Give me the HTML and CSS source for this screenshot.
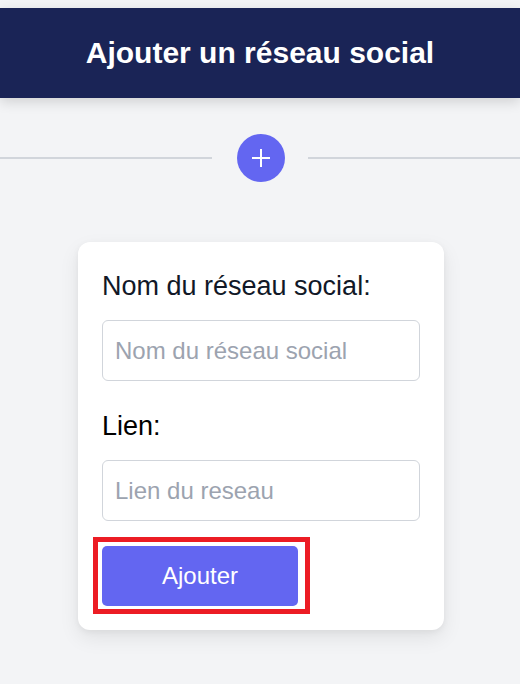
FILE: index.html
```html
<!DOCTYPE html>
<html lang="fr">
<head>
<meta charset="utf-8">
<title>Ajouter un réseau social</title>
<link rel="stylesheet" href="styles.css">
</head>
<body>
  <header class="topbar">
    <h1 class="title">Ajouter un réseau social</h1>
  </header>
  <div class="divider">
    <span class="line"></span>
    <span class="plus">
      <svg width="20" height="20" viewBox="0 0 20 20"><path d="M10 1v18M1 10h18" stroke="#fff" stroke-width="2" fill="none"/></svg>
    </span>
    <span class="line"></span>
  </div>
  <main class="wrap">
    <form class="card">
      <label class="label" for="nom">Nom du réseau social:</label>
      <input class="field" id="nom" type="text" placeholder="Nom du réseau social">
      <label class="label second" for="lien">Lien:</label>
      <input class="field" id="lien" type="text" placeholder="Lien du reseau">
      <div class="btnwrap">
        <button class="btn" type="button">Ajouter</button>
        <span class="mark"></span>
      </div>
    </form>
  </main>
</body>
</html>
```
FILE: styles.css
```css
* { box-sizing: border-box; }
html, body { margin: 0; padding: 0; }
body {
  background: #f3f4f6;
  font-family: "Liberation Sans", Arial, sans-serif;
  padding-top: 8px;
  min-height: 684px;
}
.topbar {
  background: #1a2456;
  height: 90px;
  display: flex;
  align-items: center;
  justify-content: center;
  box-shadow: 0 4px 12px rgba(0,0,0,0.14);
  position: relative;
}
.title {
  margin: 0;
  color: #fff;
  font-size: 30px;
  font-weight: 700;
}
.divider {
  display: flex;
  align-items: center;
  gap: 24px;
  margin-top: 36px;
  height: 48px;
}
.line {
  flex: 1;
  height: 2px;
  background: #d1d5db;
}
.plus {
  width: 48px;
  height: 48px;
  border-radius: 50%;
  background: #6366f1;
  display: flex;
  align-items: center;
  justify-content: center;
  transform: translateX(1px);
}
.wrap {
  display: flex;
  justify-content: center;
  padding-top: 60px;
}
.card {
  width: 366px;
  background: #fff;
  border-radius: 12px;
  padding: 24px;
  box-shadow: 0 8px 20px rgba(0,0,0,0.08), 0 2px 6px rgba(0,0,0,0.05);
  display: flex;
  flex-direction: column;
  margin-left: 2px;
}
.label {
  font-size: 27px;
  line-height: 40px;
  color: #111827;
  margin-bottom: 14px;
}
.label.second { margin-top: 25px; color: #000; }
.field {
  height: 61px;
  width: 100%;
  border: 1px solid #d1d5db;
  border-radius: 6px;
  padding: 0 12px;
  font-family: "Liberation Sans", Arial, sans-serif;
  font-size: 24px;
  color: #111827;
  background: #fff;
}
.field::placeholder { color: #9ca3af; }
.btnwrap {
  margin-top: 25px;
  position: relative;
  width: 196px;
}
.btn {
  display: block;
  width: 196px;
  height: 60px;
  border: none;
  border-radius: 5px;
  background: #6366f1;
  color: #fff;
  font-family: "Liberation Sans", Arial, sans-serif;
  font-size: 24px;
}
.mark {
  position: absolute;
  left: -9px;
  top: -9px;
  right: -12px;
  bottom: -8px;
  border: 5px solid #ec1c24;
  pointer-events: none;
}
```
